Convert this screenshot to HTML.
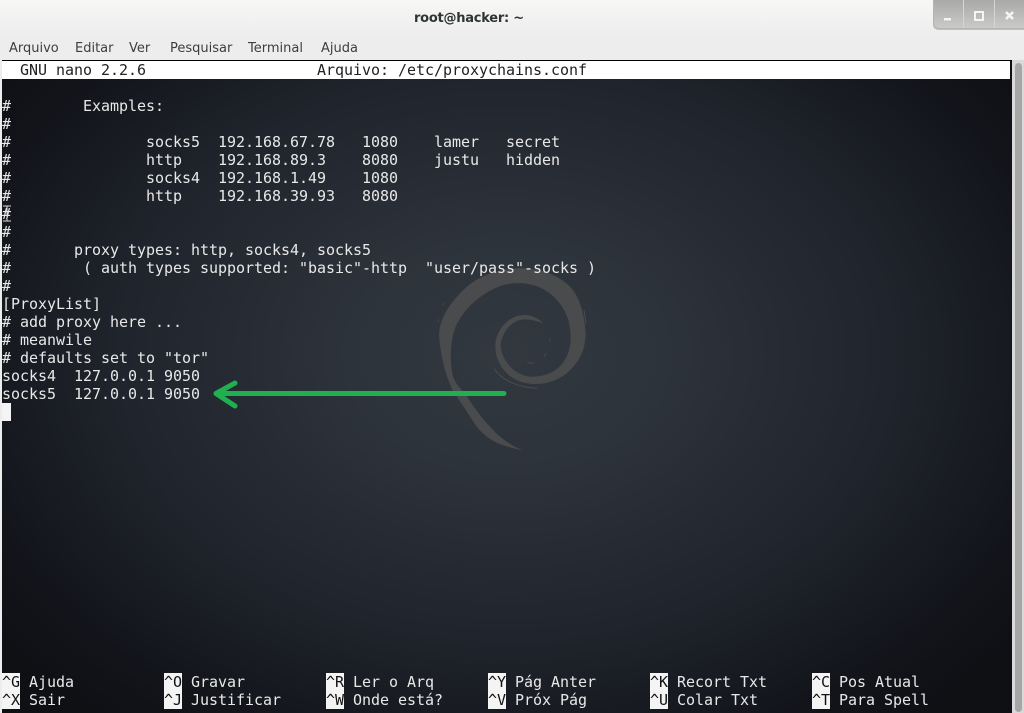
<!DOCTYPE html>
<html><head><meta charset="utf-8"><style>
html,body{margin:0;padding:0;width:1024px;height:713px;overflow:hidden;background:#ededed}
#tb{position:absolute;left:0;top:0;width:1024px;height:36px;background:linear-gradient(#f7f7f6,#ededed)}
#title{position:absolute;left:414px;top:11px;font:bold 13px "DejaVu Sans",sans-serif;letter-spacing:-.25px;color:#2e3436;white-space:pre}
.m{position:absolute;top:41px;font:13px "DejaVu Sans",sans-serif;letter-spacing:0;color:#3a3f40;white-space:pre}
#btn{position:absolute;left:933px;top:0;width:91px;height:29px;background:linear-gradient(#a9a9a7,#cbcbc9);border-bottom-left-radius:5px;box-shadow:inset 1px -1px 0 #b5b5b3,0 1px 0 #c0c0be}
.sep{position:absolute;top:0;width:1px;height:28px;background:#d6d6d4}
#term{position:absolute;left:2px;top:60px;width:1010px;height:653px;background:radial-gradient(ellipse 640px 470px at 505px 295px,#32383f 0%,#2d333b 25%,#20242c 60%,#12141a 88%,#0e1014 100%);overflow:hidden}
#topline{position:absolute;left:0;top:0;width:1010px;height:1px;background:#000}
#hdr{position:absolute;left:0;top:1px;width:1008px;height:18px;background:#fff}
.r{position:absolute;left:0;font:15px/18px "DejaVu Sans Mono",monospace;color:#e8e8e8;white-space:pre;letter-spacing:-.03px}
.k{position:absolute;width:18px;height:18px;background:#f4f4f4;color:#111;font:15px/18px "DejaVu Sans Mono",monospace;white-space:pre;letter-spacing:-.03px}
.l{position:absolute;font:15px/18px "DejaVu Sans Mono",monospace;color:#e8e8e8;white-space:pre;letter-spacing:-.03px}
#sb{position:absolute;left:1012px;top:60px;width:12px;height:653px;background:#d9d9d9}
#th{position:absolute;left:3px;top:3px;width:7px;height:649px;background:#a6a6a6;border-radius:4px}
svg{position:absolute;left:0;top:0}
</style></head><body>
<div id="tb"></div>
<div id="title">root@hacker: ~</div>
<div id="btn"><div class="sep" style="left:30px"></div><div class="sep" style="left:61px"></div></div>
<svg width="1024" height="36" style="z-index:3"><rect x="944" y="18" width="7" height="2.5" fill="#f5f5f5"/><rect x="975" y="12" width="8" height="8" fill="none" stroke="#f5f5f5" stroke-width="2"/><path d="M1006 12L1013 19M1013 12L1006 19" stroke="#f5f5f5" stroke-width="2.6" fill="none"/></svg>
<div class="m" style="left:9px">Arquivo</div>
<div class="m" style="left:75px">Editar</div>
<div class="m" style="left:129px">Ver</div>
<div class="m" style="left:170px">Pesquisar</div>
<div class="m" style="left:248px">Terminal</div>
<div class="m" style="left:321px">Ajuda</div>
<div id="sb"><div id="th"></div></div>
<div id="term">
<svg width="1010" height="653" style="left:-2px;top:-60px"><g transform="translate(420 260) scale(.3333)"><path fill="#4a4b4c" d="M310 572C280 566 240 555 215 540C195 528 180 512 170 500C150 470 125 430 100 395C80 355 63 300 57 225C60 175 85 135 130 90C170 50 230 28 290 25C350 22 410 40 450 80C480 110 495 170 497 225C495 270 480 305 440 340C410 362 380 372 350 372C310 372 275 360 250 328C232 305 225 280 226 250C230 210 265 165 315 165C335 165 355 175 370 190C350 182 330 178 310 178C275 182 245 215 242 260C245 300 285 350 335 350C385 350 420 330 440 290C455 260 455 220 445 180C430 130 390 90 340 75C300 65 260 68 225 85C170 110 125 155 105 205C92 240 88 300 98 345C105 370 120 385 135 400C160 440 190 480 210 500C240 535 275 558 310 572Z"/><path fill="none" stroke="#4a4b4c" stroke-width="3" d="M222 325C245 362 295 382 352 385M68 135L72 130M54 185L56 178M390 235L390 245M372 290L378 280M322 308L342 310M492 150L498 190"/></g>
<path d="M504 393.5H222M235 383L216 393.5L235 406" fill="none" stroke="#1fb14f" stroke-width="5" stroke-linecap="round" stroke-linejoin="round"/></svg>
<div id="topline"></div><div id="hdr"></div>
<div class="k" style="left:18px;top:1px;width:auto;background:none;color:#222">GNU nano 2.2.6</div>
<div class="k" style="left:315px;top:1px;width:auto;background:none;color:#222">Arquivo: /etc/proxychains.conf</div>
<div class="r" style="top:37px">#        Examples:</div>
<div class="r" style="top:55px">#</div>
<div class="r" style="top:73px">#               socks5  192.168.67.78   1080    lamer   secret</div>
<div class="r" style="top:91px">#               http    192.168.89.3    8080    justu   hidden</div>
<div class="r" style="top:109px">#               socks4  192.168.1.49    1080</div>
<div class="r" style="top:127px">#               http    192.168.39.93   8080</div>
<div class="r" style="top:145px">#</div>
<div class="r" style="top:163px">#</div>
<div class="r" style="top:181px">#       proxy types: http, socks4, socks5</div>
<div class="r" style="top:199px">#        ( auth types supported: "basic"-http  "user/pass"-socks )</div>
<div class="r" style="top:217px">#</div>
<div class="r" style="top:235px">[ProxyList]</div>
<div class="r" style="top:253px"># add proxy here ...</div>
<div class="r" style="top:271px"># meanwile</div>
<div class="r" style="top:289px"># defaults set to "tor"</div>
<div class="r" style="top:307px">socks4  127.0.0.1 9050</div>
<div class="r" style="top:325px">socks5  127.0.0.1 9050</div>
<div style="position:absolute;left:0;top:343px;width:9px;height:18px;background:#f4f4f4"></div>
<svg width="12" height="20" style="left:0;top:145px"><path d="M1 1H5V16H1M5 1H9M5 16H9" fill="none" stroke="#ddd" stroke-width="1"/></svg>

<div class="k" style="left:0;top:613px">^G</div><div class="l" style="left:27px;top:613px">Ajuda</div>
<div class="k" style="left:0;top:631px">^X</div><div class="l" style="left:27px;top:631px">Sair</div>
<div class="k" style="left:162px;top:613px">^O</div><div class="l" style="left:189px;top:613px">Gravar</div>
<div class="k" style="left:162px;top:631px">^J</div><div class="l" style="left:189px;top:631px">Justificar</div>
<div class="k" style="left:324px;top:613px">^R</div><div class="l" style="left:351px;top:613px">Ler o Arq</div>
<div class="k" style="left:324px;top:631px">^W</div><div class="l" style="left:351px;top:631px">Onde está?</div>
<div class="k" style="left:486px;top:613px">^Y</div><div class="l" style="left:513px;top:613px">Pág Anter</div>
<div class="k" style="left:486px;top:631px">^V</div><div class="l" style="left:513px;top:631px">Próx Pág</div>
<div class="k" style="left:648px;top:613px">^K</div><div class="l" style="left:675px;top:613px">Recort Txt</div>
<div class="k" style="left:648px;top:631px">^U</div><div class="l" style="left:675px;top:631px">Colar Txt</div>
<div class="k" style="left:810px;top:613px">^C</div><div class="l" style="left:837px;top:613px">Pos Atual</div>
<div class="k" style="left:810px;top:631px">^T</div><div class="l" style="left:837px;top:631px">Para Spell</div>
</div>
</body></html>
